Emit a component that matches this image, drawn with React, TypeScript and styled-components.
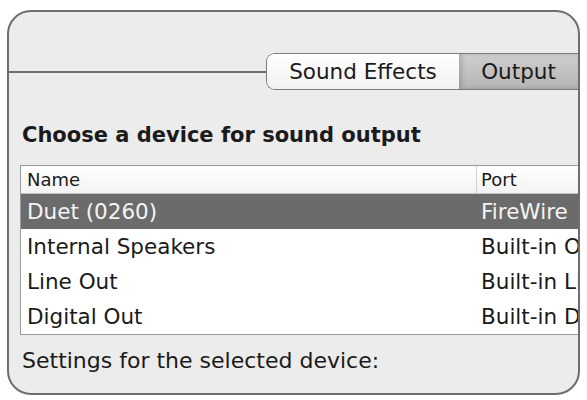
import React from 'react';
import styled, { createGlobalStyle } from 'styled-components';

const GlobalStyle = createGlobalStyle`
  html, body {
    margin: 0;
    padding: 0;
    background: #ffffff;
  }
  body {
    font-family: "DejaVu Sans", "Liberation Sans", sans-serif;
    color: #1a1a1a;
  }
`;

const Window = styled.div`
  margin: 10px 7px 0 7px;
  height: 385px;
  box-sizing: border-box;
  border: 2px solid #6e6e6e;
  border-radius: 24px;
  background: #ececec;
  overflow: hidden;
  display: flex;
  flex-direction: column;
`;

const TabStrip = styled.div`
  margin-top: 41px;
  height: 37px;
  display: flex;
  align-items: center;
`;

const TabRule = styled.div`
  flex: 1;
  height: 2px;
  background: #707070;
`;

const Segmented = styled.div`
  display: flex;
  height: 37px;
  box-sizing: border-box;
  border: 1.5px solid #7c7c7c;
  border-right: none;
  border-radius: 9px 0 0 9px;
  overflow: hidden;
`;

const Segment = styled.div<{ $active?: boolean; $width: number }>`
  width: ${p => p.$width}px;
  display: flex;
  align-items: center;
  justify-content: center;
  font-size: 21.5px;
  color: #1a1a1a;
  background: ${p =>
    p.$active
      ? 'linear-gradient(to bottom, #cfcfcf, #b4b4b4)'
      : 'linear-gradient(to bottom, #ffffff, #f1f1f1)'};
  box-shadow: ${p => (p.$active ? 'inset 3px 0 4px rgba(0,0,0,0.15)' : 'none')};
`;

const Heading = styled.div`
  margin: 33px 0 0 13px;
  font-size: 21px;
  line-height: 24px;
  font-weight: bold;
  color: #1a1a1a;
  white-space: nowrap;
`;

const Table = styled.div`
  margin: 18px -40px 0 11px;
  background: #ffffff;
  border: 1px solid #9a9a9a;
  box-shadow: inset 0 1px 2px rgba(0,0,0,0.2);
`;

const Row = styled.div<{ $selected?: boolean; $header?: boolean }>`
  display: grid;
  grid-template-columns: 455px 1fr;
  height: ${p => (p.$header ? 27 : 35)}px;
  background: ${p =>
    p.$selected ? '#6b6b6b' : p.$header ? 'linear-gradient(to bottom, #ffffff, #f3f3f3)' : '#ffffff'};
  border-bottom: ${p => (p.$header ? '1px solid #c4c4c4' : 'none')};
  color: ${p => (p.$selected ? '#f4f4f4' : '#1a1a1a')};
  font-size: ${p => (p.$header ? 18 : 21.5)}px;
`;

const Cell = styled.div<{ $divider?: boolean }>`
  display: flex;
  align-items: center;
  padding-left: ${p => (p.$divider ? 4 : 6)}px;
  border-left: ${p => (p.$divider ? '1px solid #d0d0d0' : 'none')};
  white-space: nowrap;
  overflow: hidden;
`;

const PortCell = styled(Cell)`
  padding-left: 5px;
`;

const Footer = styled.div`
  margin: 14px 0 0 13px;
  font-size: 22px;
  line-height: 24px;
  color: #1a1a1a;
  white-space: nowrap;
`;

const devices = [
  { name: 'Duet (0260)', port: 'FireWire', selected: true },
  { name: 'Internal Speakers', port: 'Built-in Output' },
  { name: 'Line Out', port: 'Built-in Line Output' },
  { name: 'Digital Out', port: 'Built-in Digital Output' },
];

export default function App() {
  return (
    <>
      <GlobalStyle />
      <Window>
        <TabStrip>
          <TabRule />
          <Segmented>
            <Segment $width={192}>Sound Effects</Segment>
            <Segment $width={119} $active>Output</Segment>
          </Segmented>
        </TabStrip>
        <Heading>Choose a device for sound output</Heading>
        <Table>
          <Row $header>
            <Cell>Name</Cell>
            <Cell $divider>Port</Cell>
          </Row>
          {devices.map(d => (
            <Row key={d.name} $selected={d.selected}>
              <Cell>{d.name}</Cell>
              <PortCell>{d.port}</PortCell>
            </Row>
          ))}
        </Table>
        <Footer>Settings for the selected device:</Footer>
      </Window>
    </>
  );
}
